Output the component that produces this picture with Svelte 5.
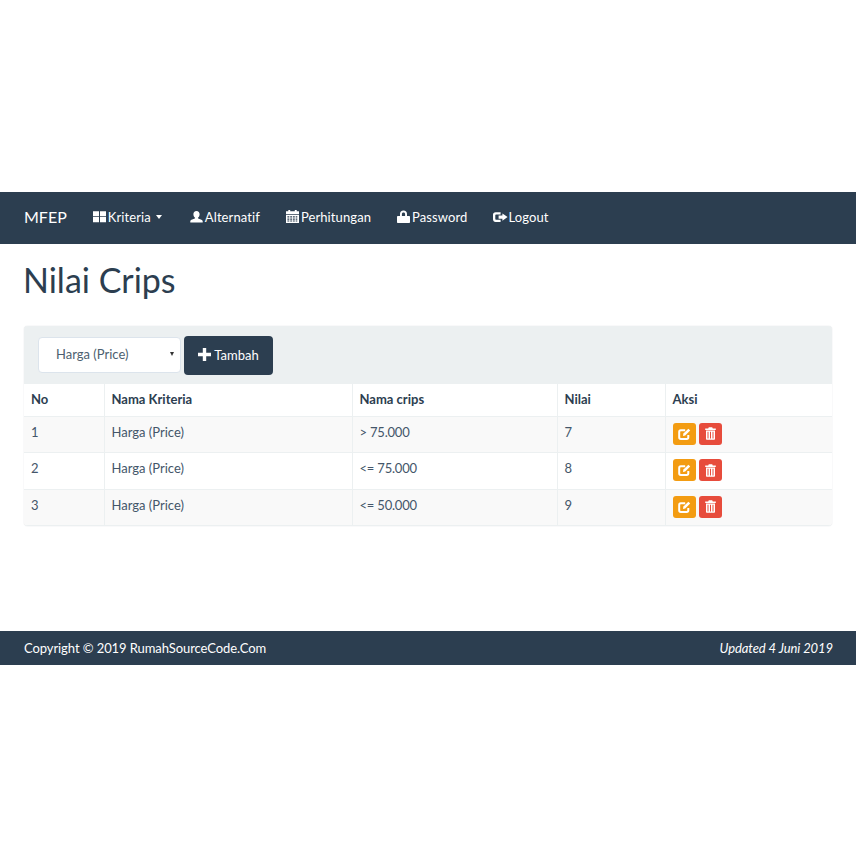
<script>
  const links = [
    { label: 'Kriteria', icon: 'grid', caret: true },
    { label: 'Alternatif', icon: 'user' },
    { label: 'Perhitungan', icon: 'calendar' },
    { label: 'Password', icon: 'lock' },
    { label: 'Logout', icon: 'logout' }
  ];

  const rows = [
    { no: 1, kriteria: 'Harga (Price)', crips: '> 75.000', nilai: 7 },
    { no: 2, kriteria: 'Harga (Price)', crips: '<= 75.000', nilai: 8 },
    { no: 3, kriteria: 'Harga (Price)', crips: '<= 50.000', nilai: 9 }
  ];
</script>

<div class="page">
  <nav>
    <span class="brand">MFEP</span>
    {#each links as link}
      <a class="nav-link" href="#top">
        <svg class="nav-icon" viewBox="0 0 13 13" fill="currentColor" aria-hidden="true">
          {#if link.icon === 'grid'}
            <path d="M0 1.200h6v5H0zM7 1.200h6v5H7zM0 7.100h6v5.200H0zM7 7.100h6v5.200H7z"/>
          {:else if link.icon === 'user'}
            <path d="M6.500 1c2 0 3.100 1.400 3.100 3.300 0 1.400-.6 2.600-1.500 3.300v.9c1.700.5 4.100 1.200 4.600 2.400V12.500H.3V10.900c.5-1.200 2.900-1.900 4.600-2.400v-.9c-.9-.7-1.500-1.900-1.500-3.300C3.400 2.400 4.500 1 6.500 1z"/>
          {:else if link.icon === 'calendar'}
            <path d="M2.300 0h1.900v1.300h4.600V0h1.900v1.300H13v3H0v-3h2.300zM0 5h13v8H0zM1.400 6.300v1.300h1.900V6.300zm2.800 0v1.300h1.900V6.300zm2.700 0v1.300h1.900V6.300zm2.800 0v1.300h1.600V6.300zM1.400 8.500v1.200h1.900V8.500zm2.800 0v1.200h1.900V8.500zm2.700 0v1.200h1.900V8.500zm2.800 0v1.200h1.600V8.500zm-8.300 2v1.100h1.900v-1.100zm2.800 0v1.100h1.900v-1.100zm2.700 0v1.100h1.900v-1.100zm2.800 0v1.100h1.600v-1.100z" fill-rule="evenodd"/>
          {:else if link.icon === 'lock'}
            <path d="M6.500.6c2.200 0 3.500 1.500 3.500 3.500v1.900h2c.6 0 1 .4 1 1v5c0 .6-.4 1-1 1H1c-.6 0-1-.4-1-1V7c0-.6.4-1 1-1h2V4.100C3 2.100 4.300.6 6.500.6zm0 1.800c-1 0-1.600.7-1.600 1.700v1.900h3.200V4.100c0-1-.6-1.700-1.600-1.700z" fill-rule="evenodd"/>
          {:else}
            <path d="M2.600 2.200h5v2.300H3.300c-.6 0-1 .4-1 1v3.300c0 .6.4 1 1 1h4.300v2.300h-5C1 11.800 0 10.800 0 9.200V4.800C0 3.200 1 2.200 2.600 2.200zM9.400 3.400 14.600 7.100l-5.200 3.700V8.800H5.600V5.400h3.800z"/>
          {/if}
        </svg>
        <span>{link.label}</span>
        {#if link.caret}<span class="caret"></span>{/if}
      </a>
    {/each}
  </nav>

  <main>
    <h1>Nilai Crips</h1>

    <section class="panel">
      <div class="toolbar">
        <div class="select">
          <span>Harga (Price)</span>
          <span class="arrow"></span>
        </div>
        <button type="button" class="add">
          <svg width="13" height="13" viewBox="0 0 13 13" fill="currentColor" aria-hidden="true">
            <path d="M4.800 0h3.400v4.800H13v3.400H8.200V13H4.800V8.200H0V4.800h4.800z"/>
          </svg>
          Tambah
        </button>
      </div>

      <table>
        <thead>
          <tr>
            <th class="c-no">No</th>
            <th class="c-kriteria">Nama Kriteria</th>
            <th class="c-crips">Nama crips</th>
            <th class="c-nilai">Nilai</th>
            <th>Aksi</th>
          </tr>
        </thead>
        <tbody>
          {#each rows as row}
            <tr>
              <td>{row.no}</td>
              <td>{row.kriteria}</td>
              <td class="crips">{row.crips}</td>
              <td>{row.nilai}</td>
              <td>
                <div class="actions">
                  <button type="button" class="act edit" aria-label="Edit">
                    <svg width="13" height="12" viewBox="0 0 13 12" fill="none" stroke="currentColor" aria-hidden="true">
                      <path d="M10.300 7v2.300c0 1-.6 1.600-1.600 1.600H2.800c-1 0-1.600-.6-1.600-1.600V3.900c0-1 .6-1.600 1.600-1.600h4.400" stroke-width="2"/>
                      <path d="M5 8 5.400 5.600 10.400.8l1.800 1.700-5 5z" fill="currentColor" stroke="none"/>
                    </svg>
                  </button>
                  <button type="button" class="act del" aria-label="Hapus">
                    <svg width="11" height="13" viewBox="0 0 11 13" fill="currentColor" aria-hidden="true">
                      <path d="M3.800.3h3.400l.6 1.300h3v1.300H.2V1.600h3zM1 3.600h9v8.200c0 .6-.4 1-1 1H2c-.6 0-1-.4-1-1zm1.500 1.200v6.700h1V4.800zm2.500 0v6.700h1V4.800zm2.500 0v6.700h1V4.800z" fill-rule="evenodd"/>
                    </svg>
                  </button>
                </div>
              </td>
            </tr>
          {/each}
        </tbody>
      </table>
    </section>
  </main>

  <footer>
    <span>Copyright © 2019 RumahSourceCode.Com</span>
    <em>Updated 4 Juni 2019</em>
  </footer>
</div>

<style>
  :global(body) {
    margin: 0;
    background: #fff;
    font-family: Lato, "Liberation Sans", sans-serif;
    color: #2c3e50;
  }
  .page {
    padding-top: 192px;
  }
  nav {
    height: 51.500px;
    background: #2c3e50;
    display: flex;
    align-items: center;
    padding: 0 0 2px 24px;
    color: #fff;
    box-sizing: border-box;
  }
  .brand {
    font-size: 16px;
    margin-right: 26px;
  }
  .nav-link {
    display: flex;
    align-items: center;
    color: #fff;
    text-decoration: none;
    font-size: 13px;
    letter-spacing: 0.1px;
    margin-right: 26px;
  }
  .nav-icon {
    width: 13px;
    height: 13px;
    margin-right: 2px;
    flex: none;
    overflow: visible;
  }
  .caret {
    width: 0;
    height: 0;
    margin: 0 2px 0 5px;
    border-top: 4px solid #fff;
    border-left: 3.500px solid transparent;
    border-right: 3.500px solid transparent;
  }
  main {
    padding: 0 24px;
  }
  h1 {
    margin: 0 0 0 -1px;
    padding-top: 15px;
    height: 67.500px;
    font-size: 34px;
    line-height: 42px;
    font-weight: 400;
    box-sizing: content-box;
  }
  .panel {
    border-radius: 4px;
    box-shadow: 0 0 1px rgba(44, 62, 80, 0.3);
    overflow: hidden;
  }
  .toolbar {
    height: 58px;
    background: #ecf0f1;
    display: flex;
    align-items: center;
    padding-left: 14px;
    box-sizing: border-box;
    gap: 3px;
  }
  .select {
    width: 143px;
    height: 36px;
    background: #fff;
    border: 1px solid #dce4ec;
    border-radius: 4px;
    box-sizing: border-box;
    display: flex;
    align-items: center;
    justify-content: space-between;
    padding: 0 6px 2px 17px;
    font-size: 13px;
    color: #4d5f70;
  }
  .arrow {
    width: 0;
    height: 0;
    border-top: 4px solid #333;
    border-left: 2.500px solid transparent;
    border-right: 2.500px solid transparent;
  }
  .add {
    width: 89px;
    height: 39px;
    border: none;
    border-radius: 4px;
    background: #2c3e50;
    color: #fff;
    font: 13px Lato, sans-serif;
    display: flex;
    align-items: center;
    justify-content: center;
    gap: 3px;
    padding: 0 0 1px;
  }
  table {
    width: 100%;
    border-collapse: collapse;
    table-layout: fixed;
    font-size: 13px;
  }
  th, td {
    text-align: left;
    padding: 0 7px;
    border-left: 1px solid #ecf0f1;
    box-sizing: border-box;
  }
  th:first-child, td:first-child {
    border-left: none;
  }
  th {
    height: 32px;
    font-weight: 700;
    padding-bottom: 2px;
  }
  td {
    height: 36.500px;
    padding-top: 6px;
    line-height: 18px;
    vertical-align: top;
    border-top: 1px solid #ecf0f1;
    color: #44566a;
  }
  .crips {
    letter-spacing: -0.2px;
  }
  tbody tr:nth-child(odd) td {
    background: #f9f9f9;
  }
  tbody tr:last-child td {
    border-bottom: 1px solid #ecf0f1;
  }
  .c-no { width: 80px; }
  .c-kriteria { width: 248px; }
  .c-crips { width: 205px; }
  .c-nilai { width: 108px; }
  .actions {
    display: flex;
    gap: 3px;
  }
  .act {
    width: 23px;
    height: 22px;
    border: none;
    border-radius: 3px;
    padding: 0;
    color: #fff;
    display: flex;
    align-items: center;
    justify-content: center;
  }
  .edit { background: #f39c12; }
  .del { background: #e74c3c; }
  footer {
    margin-top: 105px;
    height: 34px;
    background: #2c3e50;
    color: #fff;
    display: flex;
    align-items: center;
    justify-content: space-between;
    padding: 0 23px 0 24px;
    font-size: 13px;
    letter-spacing: -0.08px;
  }
</style>
